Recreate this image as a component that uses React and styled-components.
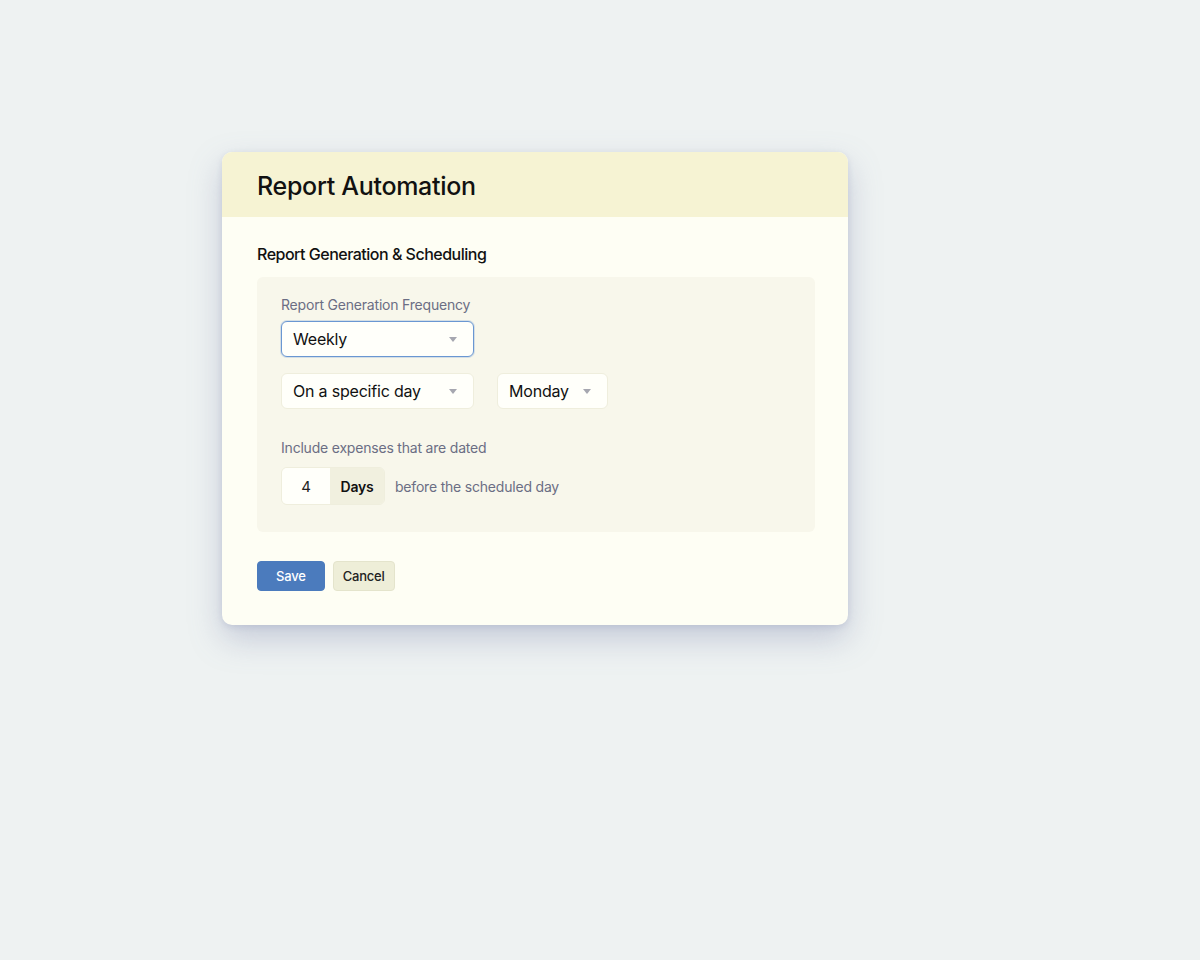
import React from "react";
import styled, { createGlobalStyle } from "styled-components";

const Global = createGlobalStyle`
  html, body { margin: 0; padding: 0; }
  body {
    background: #eef2f2;
    font-family: Inter, "Noto Sans", sans-serif;
    width: 1200px;
    height: 960px;
  }
`;

const Page = styled.div`
  padding: 152px 0 0 222px;
`;

const Card = styled.div`
  width: 626px;
  background: #fefef4;
  border-radius: 10px;
  overflow: hidden;
  box-shadow: 0 14px 32px rgba(120, 130, 170, 0.35), 0 2px 6px rgba(120, 130, 170, 0.2);
`;

const Header = styled.div`
  height: 65px;
  background: #f6f3d3;
  display: flex;
  align-items: center;
  padding: 2px 35px 0;
  box-sizing: border-box;
`;

const Title = styled.h1`
  margin: 0;
  font-size: 25px;
  font-weight: 500;
  color: #111;
  letter-spacing: -0.3px;
`;

const Body = styled.div`
  padding: 27px 33px 34px 35px;
`;

const SectionTitle = styled.h2`
  margin: 0 0 13px;
  font-size: 16px;
  font-weight: 500;
  color: #111;
  letter-spacing: -0.5px;
`;

const Panel = styled.div`
  background: #f8f7eb;
  border-radius: 6px;
  padding: 19px 24px 27px;
`;

const Label = styled.div`
  font-size: 14px;
  color: #6b6e84;
  letter-spacing: -0.2px;
  margin-bottom: ${(p) => p.$mb ?? 8}px;
`;

const Row = styled.div`
  display: flex;
  align-items: center;
  gap: ${(p) => p.$gap ?? 24}px;
  margin-top: ${(p) => p.$mt || 0}px;
`;

const Select = styled.div`
  box-sizing: border-box;
  width: ${(p) => p.$w}px;
  height: 36px;
  background: #fffffa;
  border: 1px solid ${(p) => (p.$focus ? "#6a97d2" : "#efeedd")};
  box-shadow: ${(p) => (p.$focus ? "0 0 0 1px rgba(106,151,210,0.25)" : "none")};
  border-radius: 6px;
  display: flex;
  align-items: center;
  justify-content: space-between;
  padding: 0 16px 0 11px;
  font-size: 16px;
  letter-spacing: -0.2px;
  color: #111;
`;

const Caret = styled.span`
  width: 0;
  height: 0;
  border-left: 4px solid transparent;
  border-right: 4px solid transparent;
  border-top: 5px solid #a6a7b0;
`;

const InputGroup = styled.div`
  display: flex;
  height: 36px;
  border-radius: 6px;
  overflow: hidden;
  border: 1px solid #efeedd;
`;

const NumberBox = styled.div`
  width: 48px;
  background: #fffffa;
  display: flex;
  align-items: center;
  justify-content: center;
  font-size: 15px;
  color: #222;
`;

const Addon = styled.div`
  width: 54px;
  background: #f1f0df;
  display: flex;
  align-items: center;
  justify-content: center;
  font-size: 14px;
  font-weight: 600;
  color: #111;
  letter-spacing: -0.2px;
`;

const Hint = styled.span`
  font-size: 14px;
  color: #6b6e84;
  letter-spacing: -0.2px;
`;

const Actions = styled.div`
  display: flex;
  gap: 8px;
  margin-top: 29px;
`;

const Button = styled.button`
  box-sizing: border-box;
  height: 30px;
  padding: 0 ${(p) => (p.$primary ? 18 : 9)}px;
  border-radius: 4px;
  font-family: Inter, sans-serif;
  font-size: 13px;
  font-weight: 500;
  letter-spacing: -0.2px;
  cursor: pointer;
  background: ${(p) => (p.$primary ? "#4b7bbd" : "#eeeed8")};
  color: ${(p) => (p.$primary ? "#fff" : "#222")};
  border: 1px solid ${(p) => (p.$primary ? "#4b7bbd" : "#e4e4cc")};
`;

export default function App() {
  return (
    <>
      <Global />
      <Page>
        <Card>
          <Header>
            <Title>Report Automation</Title>
          </Header>
          <Body>
            <SectionTitle>Report Generation &amp; Scheduling</SectionTitle>
            <Panel>
              <Label>Report Generation Frequency</Label>
              <Select $w={193} $focus>
                Weekly <Caret />
              </Select>
              <Row $mt={16} $gap={23}>
                <Select $w={193}>
                  On a specific day <Caret />
                </Select>
                <Select $w={111}>
                  Monday <Caret />
                </Select>
              </Row>
              <Row $mt={30} $gap={0}>
                <Label $mb={0}>Include expenses that are dated</Label>
              </Row>
              <Row $mt={11} $gap={10}>
                <InputGroup>
                  <NumberBox>4</NumberBox>
                  <Addon>Days</Addon>
                </InputGroup>
                <Hint>before the scheduled day</Hint>
              </Row>
            </Panel>
            <Actions>
              <Button $primary>Save</Button>
              <Button>Cancel</Button>
            </Actions>
          </Body>
        </Card>
      </Page>
    </>
  );
}
